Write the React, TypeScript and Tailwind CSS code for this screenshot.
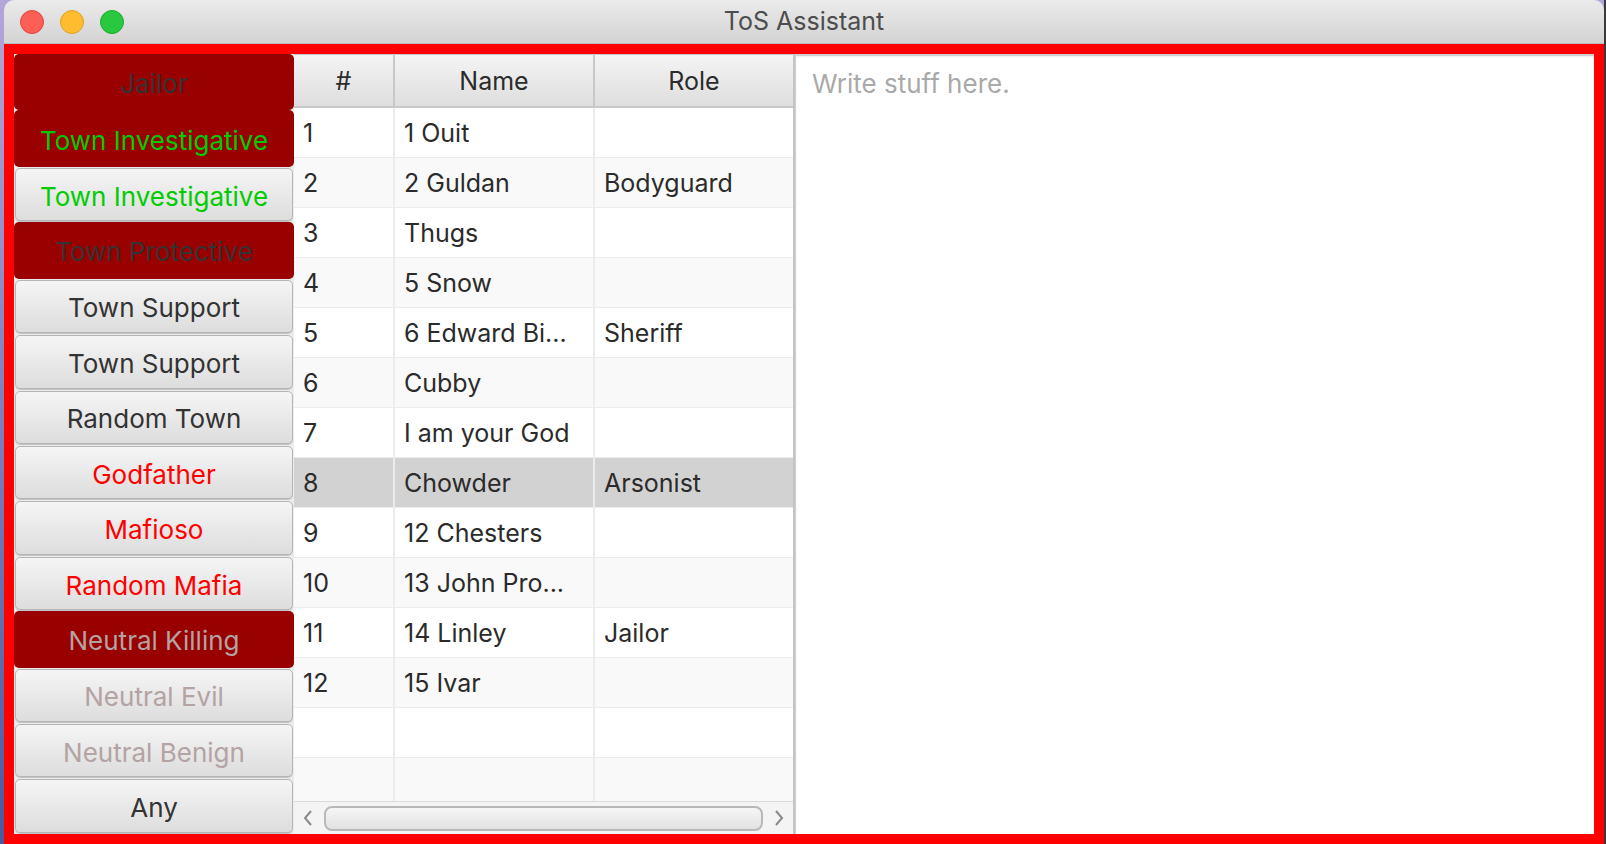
const BUTTONS = [
  { label: "Jailor", red: true, color: "text-[#333333]" },
  { label: "Town Investigative", red: true, color: "text-[#00cc00]" },
  { label: "Town Investigative", red: false, color: "text-[#00cc00]" },
  { label: "Town Protective", red: true, color: "text-[#333333]" },
  { label: "Town Support", red: false, color: "text-[#333333]" },
  { label: "Town Support", red: false, color: "text-[#333333]" },
  { label: "Random Town", red: false, color: "text-[#333333]" },
  { label: "Godfather", red: false, color: "text-[#ff0000]" },
  { label: "Mafioso", red: false, color: "text-[#ff0000]" },
  { label: "Random Mafia", red: false, color: "text-[#ff0000]" },
  { label: "Neutral Killing", red: true, color: "text-[#b3a3a3]" },
  { label: "Neutral Evil", red: false, color: "text-[#b3a3a3]" },
  { label: "Neutral Benign", red: false, color: "text-[#b3a3a3]" },
  { label: "Any", red: false, color: "text-[#333333]" },
];

const ROWS = [
  { n: "1", name: "1 Ouit", role: "" },
  { n: "2", name: "2 Guldan", role: "Bodyguard" },
  { n: "3", name: "Thugs", role: "" },
  { n: "4", name: "5 Snow", role: "" },
  { n: "5", name: "6 Edward Bi...", role: "Sheriff" },
  { n: "6", name: "Cubby", role: "" },
  { n: "7", name: "I am your God", role: "" },
  { n: "8", name: "Chowder", role: "Arsonist" },
  { n: "9", name: "12 Chesters", role: "" },
  { n: "10", name: "13 John Pro...", role: "" },
  { n: "11", name: "14 Linley", role: "Jailor" },
  { n: "12", name: "15 Ivar", role: "" },
  { n: "", name: "", role: "" },
  { n: "", name: "", role: "" },
];

function TrafficLights() {
  return (
    <div className="flex items-center gap-[16px] pl-[16px]">
      <span className="w-[24px] h-[24px] rounded-full bg-[#fd5f57] border border-[#e0443e]" />
      <span className="w-[24px] h-[24px] rounded-full bg-[#febc2e] border border-[#dea123]" />
      <span className="w-[24px] h-[24px] rounded-full bg-[#28c840] border border-[#1aab29]" />
    </div>
  );
}

export default function App() {
  return (
    <div className="w-[1606px] h-[844px] flex bg-gradient-to-b from-[#b4a6d8] to-[#4a5a9c] overflow-hidden font-['Inter','Liberation_Sans',sans-serif]">
      <div className="w-[4px]" />
      <div className="w-[1600px] flex flex-col">
        {/* title bar */}
        <div className="h-[44px] shrink-0 rounded-t-[10px] bg-gradient-to-b from-[#ebebeb] to-[#d3d3d3] border-b border-[#b9b9b9] relative flex items-center">
          <TrafficLights />
          <div className="absolute inset-0 flex items-center justify-center text-[25px] text-[#4d4d4d]">ToS Assistant</div>
        </div>

        {/* body */}
        <div className="flex-1 min-h-0 flex border-[10px] border-[#ff0000] bg-[#ececec]">
          {/* role buttons */}
          <div className="w-[280px] shrink-0 flex flex-col">
            {BUTTONS.map((b, i) =>
              b.red ? (
                <div key={i} className={`flex-1 flex items-center justify-center pt-[3px] bg-[#990000] rounded-[5px] text-[26px] ${b.color}`}>
                  {b.label}
                </div>
              ) : (
                <div key={i} className="flex-1 px-[1px] py-[1px]">
                  <div className={`h-full flex items-center justify-center pt-[3px] rounded-[5px] border border-[#b5b5b5] bg-gradient-to-b from-[#f5f5f5] to-[#dddddd] shadow-[0_1px_0_#c4c4c4] text-[26px] ${b.color}`}>
                    {b.label}
                  </div>
                </div>
              )
            )}
          </div>

          {/* table */}
          <div className="w-[501px] shrink-0 flex flex-col bg-white border-t border-[#c8c8c8] border-r-2 border-r-[#c4c4c4] text-[25px] text-[#2b2b2b]">
            <div className="h-[53px] shrink-0 flex border-b-2 border-[#c8c8c8] bg-gradient-to-b from-[#f4f4f4] to-[#dedede]">
              <div className="w-[101px] flex items-center justify-center pt-[3px] border-r-2 border-[#c8c8c8]">#</div>
              <div className="w-[200px] flex items-center justify-center pt-[3px] border-r-2 border-[#c8c8c8]">Name</div>
              <div className="flex-1 flex items-center justify-center pt-[3px]">Role</div>
            </div>
            <div className="flex-1 min-h-0 overflow-hidden">
              {ROWS.map((r, i) => (
                <div
                  key={i}
                  className={`h-[50px] flex border-b border-[#ececec] ${
                    i === 7 ? "bg-[#d2d2d2]" : i % 2 === 0 ? "bg-white" : "bg-[#f9f9f9]"
                  }`}
                >
                  <div className="w-[101px] flex items-center pl-[9px] pt-[2px] border-r-2 border-[#ececec]">{r.n}</div>
                  <div className="w-[200px] flex items-center pl-[9px] pt-[2px] border-r-2 border-[#ececec] whitespace-nowrap overflow-hidden">{r.name}</div>
                  <div className="flex-1 flex items-center pl-[9px] pt-[2px]">{r.role}</div>
                </div>
              ))}
            </div>
            {/* horizontal scrollbar */}
            <div className="h-[33px] shrink-0 flex items-center bg-[#f4f4f4] border-t border-[#dadada] px-[6px] gap-[8px]">
              <svg width="16" height="18" viewBox="0 0 16 18" className="shrink-0">
                <path d="M11 2 L5 9 L11 16" fill="none" stroke="#8a8a8a" strokeWidth="2" />
              </svg>
              <div className="flex-1 h-[25px] rounded-[8px] border-2 border-[#b8b8b8] bg-gradient-to-b from-[#f6f6f6] to-[#e2e2e2]" />
              <svg width="16" height="18" viewBox="0 0 16 18" className="shrink-0">
                <path d="M5 2 L11 9 L5 16" fill="none" stroke="#8a8a8a" strokeWidth="2" />
              </svg>
            </div>
          </div>

          {/* text area */}
          <div className="flex-1 min-w-0 bg-white border-t-2 border-l border-[#d0d0d0] shadow-[inset_0_1px_2px_rgba(0,0,0,0.08)] px-[16px] pt-[8px]">
            <div className="text-[26px] text-[#a9a9a9]">Write stuff here.</div>
          </div>
        </div>
      </div>
      <div className="w-[2px] bg-[#3a3a3a]" />
    </div>
  );
}
